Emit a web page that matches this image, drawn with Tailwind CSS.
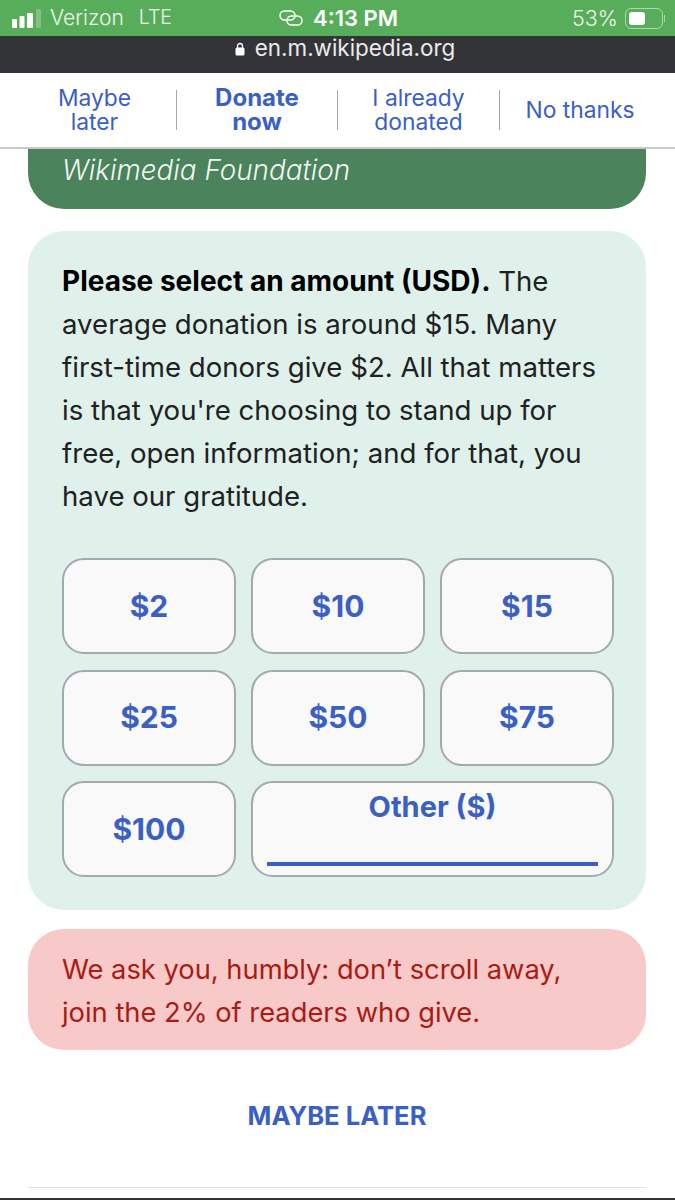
<!DOCTYPE html>
<html lang="en">
  <head>
    <meta charset="UTF-8" />
    <meta name="viewport" content="width=device-width, initial-scale=1.0" />
    <title>Donate</title>
    <script src="https://cdn.jsdelivr.net/npm/@tailwindcss/browser@4"></script>
  </head>
  <body class="bg-white font-['Inter',sans-serif] overflow-hidden">
    <div class="w-[675px] h-[1200px] flex flex-col overflow-hidden">
      <!-- status bar -->
      <div class="h-[36px] shrink-0 bg-[#58ad5a] text-white flex items-center justify-between pl-[12px] pr-[10px] relative">
        <div class="flex items-center">
          <svg width="29" height="19" viewBox="0 0 29 19" class="mr-[9px]">
            <rect x="0" y="10" width="5" height="9" rx="1" fill="#fff" />
            <rect x="7.500" y="7" width="5" height="12" rx="1" fill="#fff" />
            <rect x="15" y="4" width="6" height="15" rx="1" fill="#fff" />
            <rect x="24" y="0" width="5" height="19" rx="1" fill="#fff" fill-opacity="0.25" />
          </svg>
          <span class="text-[21px] text-white/90 font-light">Verizon</span>
          <span class="text-[19.500px] text-white/90 font-light ml-[15px]">LTE</span>
        </div>
        <div class="absolute left-[279px] top-0 h-[36px] flex items-center">
          <svg width="24" height="18" viewBox="0 0 24 18" fill="none" stroke="#fff" stroke-width="1.500" class="mr-[10px]">
            <rect x="1" y="2" width="15" height="9" rx="4.500" />
            <rect x="8" y="7" width="15" height="9" rx="4.500" />
          </svg>
          <span class="text-[22px] font-semibold">4:13 PM</span>
        </div>
        <div class="flex items-center">
          <span class="text-[21.500px] text-white/90 font-light mr-[7px]">53%</span>
          <div class="w-[38px] h-[21px] rounded-[6px] border border-white/50 pl-[3px] py-[3px]">
            <div class="w-[16px] h-full bg-white rounded-[3px]"></div>
          </div>
          <div class="w-[1px] h-[7px] bg-white/50 ml-[1px]"></div>
        </div>
      </div>

      <!-- url bar -->
      <div class="h-[37px] shrink-0 bg-[#333437] text-white/90 flex justify-center items-start pl-[15px]">
        <div class="flex items-center h-[25px]">
          <svg width="10" height="14" viewBox="0 0 10 14" class="mr-[10px]">
            <path d="M2.500 6V4a2.500 2.500 0 0 1 5 0v2" fill="none" stroke="#fff" stroke-width="1.300" />
            <rect x="0.500" y="5.500" width="9" height="8" rx="1.500" fill="#fff" />
          </svg>
          <span class="text-[22.400px] leading-none">en.m.wikipedia.org</span>
        </div>
      </div>

      <!-- top nav -->
      <div class="h-[76px] shrink-0 bg-white border-b-2 border-[#c9c9c9] flex items-center text-[#3b60c4] text-[22.800px] leading-[24px] text-center">
        <a class="w-[177px] pl-[13px] h-[40px] flex items-center justify-center border-r border-[#a8a8a8]">Maybe<br />later</a>
        <a class="w-[161px] h-[40px] flex items-center justify-center border-r border-[#a8a8a8] font-bold text-[24px]">Donate<br />now</a>
        <a class="w-[162px] h-[40px] flex items-center justify-center border-r border-[#a8a8a8]">I already<br />donated</a>
        <a class="flex-1 h-[40px] flex items-center justify-center pr-[15px]">No thanks</a>
      </div>

      <main class="flex-1 flex flex-col pl-[28px] pr-[29px]">
        <!-- campaign header -->
        <div class="h-[60px] shrink-0 bg-[#4b835c] rounded-b-[36px] text-white/95 italic font-light text-[27.800px] pl-[34px] pt-[1px] leading-[40px]">
          Wikimedia Foundation
        </div>

        <!-- amount card -->
        <section class="mt-[22px] h-[679px] shrink-0 bg-[#dff1ea] rounded-[36px] pl-[34px] pr-[32px] pt-[29px]">
          <p class="text-[27.600px] leading-[43px] text-[#202122]">
            <b class="font-bold text-black text-[28px]">Please select an amount (USD).</b> The average donation is around $15. Many first-time donors give $2. All that matters is that you're choosing to stand up for free, open information; and for that, you have our gratitude.
          </p>
          <div class="mt-[40px] grid grid-cols-3 gap-x-[15px] gap-y-[15.500px] text-[#3b60c4] text-[30px] font-bold">
            <button class="h-[96px] bg-[#f9f9f9] border-2 border-[#a2a9b1] rounded-[22px]">$2</button>
            <button class="h-[96px] bg-[#f9f9f9] border-2 border-[#a2a9b1] rounded-[22px]">$10</button>
            <button class="h-[96px] bg-[#f9f9f9] border-2 border-[#a2a9b1] rounded-[22px]">$15</button>
            <button class="h-[96px] bg-[#f9f9f9] border-2 border-[#a2a9b1] rounded-[22px]">$25</button>
            <button class="h-[96px] bg-[#f9f9f9] border-2 border-[#a2a9b1] rounded-[22px]">$50</button>
            <button class="h-[96px] bg-[#f9f9f9] border-2 border-[#a2a9b1] rounded-[22px]">$75</button>
            <button class="h-[96px] bg-[#f9f9f9] border-2 border-[#a2a9b1] rounded-[22px]">$100</button>
            <div class="col-span-2 h-[96px] bg-[#f9f9f9] border-2 border-[#a2a9b1] rounded-[22px] px-[14px] pt-[6px] flex flex-col items-center">
              <span class="leading-[36px] text-[29px]">Other ($)</span>
              <div class="mt-auto mb-[9px] w-full h-[4px] bg-[#3b60c4]"></div>
            </div>
          </div>
        </section>

        <!-- appeal -->
        <div class="mt-[19px] h-[121px] shrink-0 bg-[#f7c9c9] rounded-[36px] pl-[34px] pr-[30px] pt-[19px] text-[27.300px] leading-[43px] text-[#a81c14]">
          We ask you, humbly: don’t scroll away,<br />join the 2% of readers who give.
        </div>

        <div class="mt-[47px] text-center text-[#3b60c4] text-[25.600px] leading-[38px] font-bold">MAYBE LATER</div>
        <div class="mt-[52px] h-[1px] bg-[#e4e4e4]"></div>
      </main>
      <div class="h-[2px] shrink-0 bg-[#333437]"></div>
    </div>
  </body>
</html>
